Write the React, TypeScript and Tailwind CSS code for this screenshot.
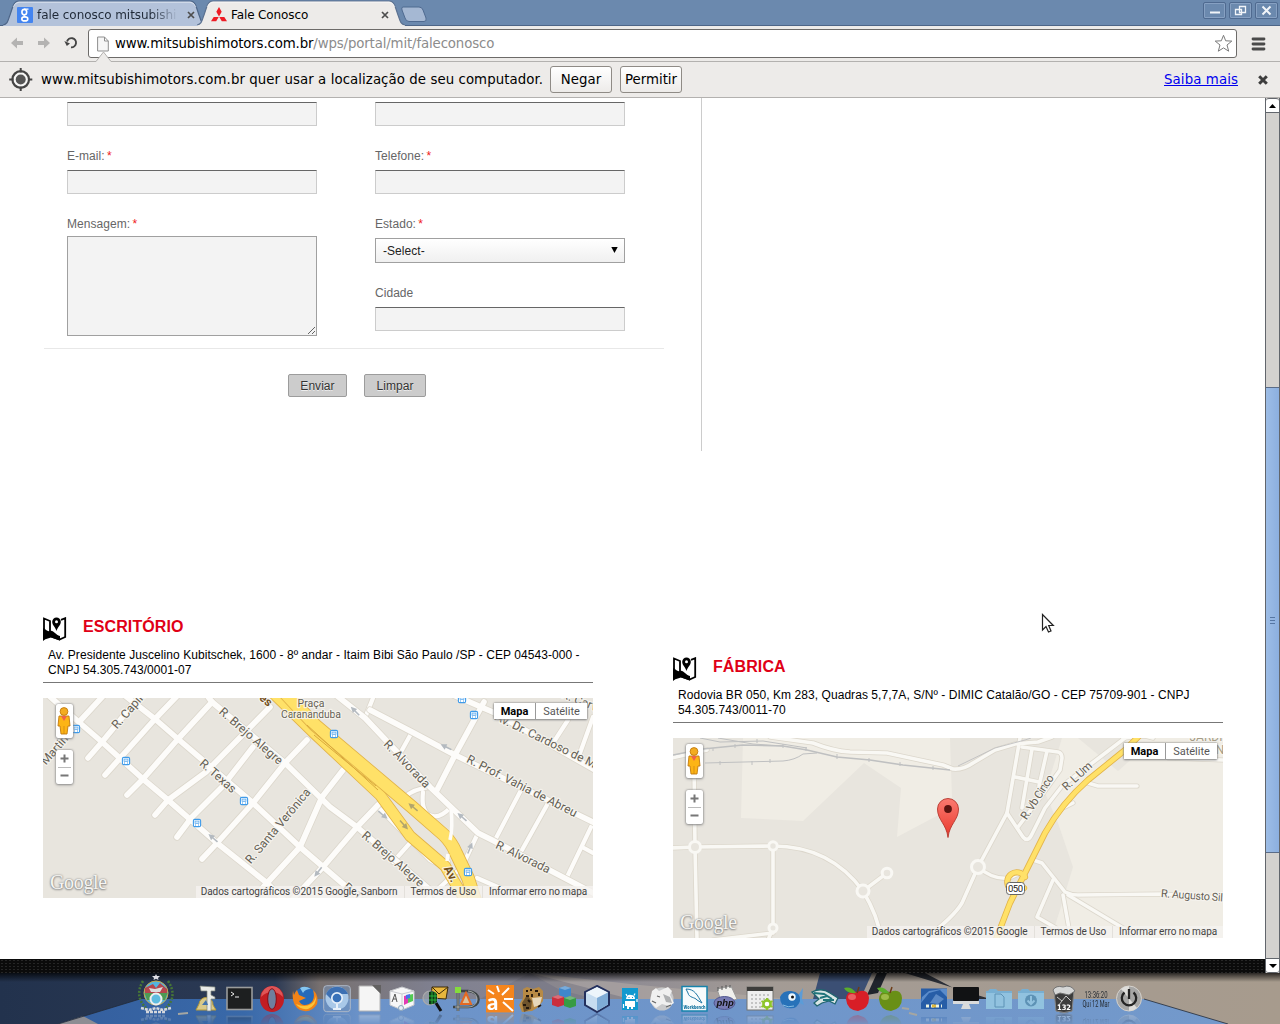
import React from "react";

type Pt = string;

/* ---------- browser chrome ---------- */

function TabShape({ w, active }: { w: number; active?: boolean }) {
  const d = `M0 25 C5 24 5 20 7 15 L10 6 Q12 1 16 1 L${w - 16} 1 Q${w - 12} 1 ${w - 10} 6 L${w - 7} 15 C${w - 5} 20 ${w - 5} 24 ${w} 25`;
  return (
    <svg className="absolute left-0 top-0" width={w} height={26} viewBox={`0 0 ${w} 26`}>
      <path d={d + " V26 H0 Z"} fill={active ? "#edebe9" : "#b3c2da"} />
      <path d={d} fill="none" stroke={active ? "#5b7190" : "#4d6587"} strokeWidth="1.2" />
      <path d={`M10 7 Q12 2.2 16 2.2 L${w - 16} 2.2 Q${w - 12} 2.2 ${w - 10} 7`} fill="none" stroke="#fff" opacity=".55" />
    </svg>
  );
}

function TabClose() {
  return (
    <svg width="8" height="8" viewBox="0 0 8 8" className="shrink-0">
      <path d="M1 1 L7 7 M7 1 L1 7" stroke="#4d4d4d" strokeWidth="1.7" />
    </svg>
  );
}

function WindowButton({ children }: { children: React.ReactNode }) {
  return (
    <div className="flex h-[17px] w-[23px] items-center justify-center rounded-[2px] border border-[#4f6a90] bg-[#6b89ae] shadow-[inset_0_0_0_1px_#86a0c2]">
      <svg width="13" height="13" viewBox="0 0 13 13" fill="none" stroke="#f2f5f9">
        {children}
      </svg>
    </div>
  );
}

function TabStrip() {
  return (
    <div className="relative flex h-[26px] shrink-0 border-b border-[#4d6587] bg-[#6b89ae]">
      <div className="relative ml-[3px] h-[26px] w-[203px]">
        <TabShape w={203} />
        <div className="relative flex h-full items-center pl-[14px] pt-[3px]">
          <div className="mr-[4px] flex h-[16px] w-[16px] shrink-0 items-center justify-center rounded-[1px] bg-[#4384f0]">
            <svg width="16" height="16" viewBox="0 0 16 16" fill="none" stroke="#fff">
              <ellipse cx="7.3" cy="5.1" rx="2.4" ry="2.7" strokeWidth="1.6" />
              <path d="M7 2.2 H11.5 M9.3 7.5 C6 8 6.5 9.3 8.5 9.8" strokeWidth="1.2" />
              <ellipse cx="7.8" cy="11.9" rx="3" ry="2" strokeWidth="1.6" />
            </svg>
          </div>
          <span className="w-[141px] overflow-hidden whitespace-nowrap bg-gradient-to-r from-[#1f2937] from-80% to-[#b3c2da] bg-clip-text text-[12px] leading-[18px] tracking-[-0.06px] text-transparent">
            fale conosco mitsubishi
          </span>
          <div className="ml-[9px]">
            <TabClose />
          </div>
        </div>
      </div>
      <div className="relative -ml-[9px] h-[26px] w-[208px]">
        <TabShape w={208} active />
        <div className="relative flex h-full items-center pl-[14px] pt-[3px]">
          <svg width="16" height="15" viewBox="0 0 16 15" className="mr-[4px]" fill="#ee1c25">
            <path d="M8 0 L10.7 4.8 L8 9.6 L5.3 4.8 Z M7.7 9.9 L5.2 14.3 H0 L2.7 9.9 Z M8.3 9.9 L10.8 14.3 H16 L13.3 9.9 Z" />
          </svg>
          <span className="w-[150px] text-[12px] leading-[18px] tracking-[-0.12px] text-black">Fale Conosco</span>
          <TabClose />
        </div>
      </div>
      <svg width="29" height="18" viewBox="0 0 29 18" className="-ml-[6px] mt-[5px]">
        <path d="M4 2 H20 Q23 2 24 5 L27 13 Q28 16.5 25 16.5 H10 Q7 16.5 6 13 L3 5 Q2 2 4 2 Z" fill="#a5b8d3" stroke="#4f6a90" />
      </svg>
      <div className="ml-auto mr-[2px] mt-[2px] flex gap-[3px]">
        <WindowButton>
          <path d="M2 8.5 H12" strokeWidth="2" />
        </WindowButton>
        <WindowButton>
          <path d="M5.5 2.5 H11.5 V8.5 H5.5 Z M1.5 5.5 H7.5 V10.5 H1.5 Z" strokeWidth="1.3" />
        </WindowButton>
        <WindowButton>
          <path d="M2.5 2.5 L10.5 10.5 M10.5 2.5 L2.5 10.5" strokeWidth="2" />
        </WindowButton>
      </div>
    </div>
  );
}

function Toolbar() {
  return (
    <div className="flex h-[36px] shrink-0 items-center border-b border-[#b3b1af] bg-[#edebe9]">
      <svg width="88" height="35" viewBox="0 26 88 35" className="shrink-0">
        <path d="M11 43 L17 37.5 V41 H23 V45 H17 V48.5 Z" fill="#b4b3b2" />
        <path d="M50 43 L44 37.5 V41 H38 V45 H44 V48.5 Z" fill="#b4b3b2" />
        <path d="M67 41.5 A4.6 4.6 0 1 1 71 47.3" fill="none" stroke="#444" strokeWidth="1.9" />
        <path d="M64.3 41 L70 43.500 L66.8 46 Z" fill="#444" />
      </svg>
      <div className="relative flex h-[29px] w-[1149px] items-center rounded-[3px] border border-[#6d6b69] bg-white pl-[8px]">
        <svg width="12" height="16" viewBox="0 0 12 16" className="mr-[6px]">
          <path d="M.6 1 H7.5 L11.3 5 V15 H.6 Z M7.5 1 V5 H11.3" fill="#f6f6f6" stroke="#8f8f8f" />
        </svg>
        <div className="text-[13.33px] tracking-[-0.14px] text-black">
          www.mitsubishimotors.com.br<span className="text-[#8c8c8c]">/wps/portal/mit/faleconosco</span>
        </div>
        <svg width="19" height="19" viewBox="0 0 19 19" className="ml-auto mr-[3px]">
          <path d="M9.5 1.3 L11.7 6.8 L17.8 7.1 L13 11 L14.7 17.2 L9.5 13.9 L4.3 17.2 L6 11 L1.2 7.1 L7.3 6.8 Z" fill="#fff" stroke="#7b7b7b" strokeLinejoin="round" />
        </svg>
      </div>
      <svg width="15" height="14" viewBox="0 0 15 14" className="ml-[14px]">
        <path d="M2 2 H13 M2 7 H13 M2 12 H13" stroke="#4a4a4a" strokeWidth="2.8" strokeLinecap="round" />
      </svg>
    </div>
  );
}

function InfoBar() {
  return (
    <div className="relative flex h-[36px] shrink-0 items-center border-b border-[#b3b1af] bg-[#edebe9]">
      <svg className="absolute left-[93px] top-[-11px]" width="22" height="12" viewBox="0 0 22 12">
        <path d="M1 11.5 L3 10.5 L10.5 1 L18 10.5 L20 11.5 Z" fill="#edebe9" />
        <path d="M1 10.5 H3 L10.5 1 L18 10.5 H20" fill="none" stroke="#b3b1af" />
      </svg>
      <svg width="24" height="24" viewBox="0 0 24 24" className="ml-[9px] mr-[8px]">
        <circle cx="11.7" cy="11.5" r="8.3" fill="#f7f7f6" stroke="#454545" strokeWidth="2.2" />
        <circle cx="11.7" cy="11.5" r="5" fill="#555" />
        <path d="M11.7 0 V4.5 M11.7 18.5 V23 M.2 11.5 H4.5 M19 11.5 H23.3" stroke="#454545" strokeWidth="2" />
      </svg>
      <span className="w-[502px] whitespace-nowrap text-[13.33px] tracking-[0.07px] text-black">
        www.mitsubishimotors.com.br quer usar a localização de seu computador.
      </span>
      <button className="ml-[7px] h-[27px] w-[62px] rounded-[3px] border border-[#8f8b86] bg-gradient-to-b from-white to-[#edebe9] text-[13.33px]">Negar</button>
      <button className="ml-[8px] h-[27px] w-[62px] rounded-[3px] border border-[#8f8b86] bg-gradient-to-b from-white to-[#edebe9] text-[13.33px]">Permitir</button>
      <a className="ml-auto mr-[20px] text-[13.33px] tracking-[0.1px] text-[#0000ee] underline">Saiba mais</a>
      <svg width="10" height="10" viewBox="0 0 10 10" className="mr-[12px]">
        <path d="M1.2 1.2 L8.8 8.8 M8.8 1.2 L1.2 8.8" stroke="#3d3d3d" strokeWidth="3" />
      </svg>
    </div>
  );
}

function Scrollbar() {
  return (
    <div className="flex w-[15px] shrink-0 flex-col border-x border-[#62666c] bg-[#d4d2cf]">
      <div className="flex h-[15px] items-center justify-center rounded-t-[3px] border-y border-[#62666c] bg-white">
        <svg width="7" height="4" viewBox="0 0 7 4"><path d="M0 4 L3.5 0 L7 4 Z" /></svg>
      </div>
      <div className="h-[274px]" />
      <div className="flex h-[466px] flex-col items-center justify-center gap-[2px] border-y border-[#5a6c88] bg-gradient-to-r from-[#9dbde6] to-[#8cafdf]">
        <div className="h-px w-[5px] bg-[#5676a3]" />
        <div className="h-px w-[5px] bg-[#5676a3]" />
        <div className="h-px w-[5px] bg-[#5676a3]" />
      </div>
      <div className="mt-auto flex h-[15px] items-center justify-center rounded-b-[3px] border-y border-[#62666c] bg-white">
        <svg width="8" height="4" viewBox="0 0 8 4"><path d="M0 0 L4 4 L8 0 Z" /></svg>
      </div>
    </div>
  );
}

/* ---------- contact form ---------- */

function Field() {
  return <div className="h-[24px] w-[250px] border border-[#ccc] border-t-[#666] bg-[#f3f3f3]" />;
}

function Label({ text, required, short }: { text: string; required?: boolean; short?: boolean }) {
  return (
    <div className={(short ? "h-[42px]" : "h-[44px]") + " pt-[22px] text-[12px] leading-[16px] tracking-[0.04px] text-[#666]"}>
      {text}
      {required && <span className="-ml-px text-[#f02020]"> *</span>}
    </div>
  );
}

function ContactForm() {
  return (
    <div className="h-[353px] w-[702px] border-r border-[#ccc] pt-[4px]">
      <div className="flex h-[246px] gap-[58px] pl-[67px]">
        <div>
          <Field />
          <Label text="E-mail:" required />
          <Field />
          <Label text="Mensagem:" required short />
          <div className="flex h-[100px] w-[250px] items-end justify-end border border-[#a0a0a0] bg-[#f3f3f3]">
            <svg width="9" height="9" viewBox="0 0 9 9"><path d="M1 8 L8 1 M5 8 L8 5" stroke="#555" strokeWidth=".9" /></svg>
          </div>
        </div>
        <div>
          <Field />
          <Label text="Telefone:" required />
          <Field />
          <Label text="Estado:" required />
          <div className="flex h-[25px] w-[250px] items-center justify-between border border-[#a0a0a0] bg-gradient-to-b from-white to-[#f0f0f0] pl-[7px] pr-[6px] pt-px text-[12px] tracking-[0.04px] text-[#222]">
            -Select-
            <svg width="7" height="6" viewBox="0 0 7 6" className="mb-[3px]"><path d="M.3 0 H6.7 L3.5 6 Z" /></svg>
          </div>
          <Label text="Cidade" />
          <Field />
        </div>
      </div>
      <div className="ml-[44px] h-px w-[620px] bg-[#e8e8e8]" />
      <div className="mt-[25px] flex gap-[17px] pl-[288px]">
        <button className="h-[23px] w-[59px] rounded-[2px] border border-[#9c9c9c] bg-[#ccc] pt-px text-[12px] tracking-[0.04px] text-[#333] [text-shadow:0_1px_0_#eee]">Enviar</button>
        <button className="h-[23px] w-[62px] rounded-[2px] border border-[#9c9c9c] bg-[#ccc] pt-px text-[12px] tracking-[0.04px] text-[#333] [text-shadow:0_1px_0_#eee]">Limpar</button>
      </div>
    </div>
  );
}

/* ---------- maps ---------- */

interface LabelProps {
  x: number;
  y: number;
  a?: number;
  len?: number;
  start?: boolean;
  bold?: boolean;
  color?: string;
  size?: number;
  children: string;
}

function MapLabel({ x, y, a = 0, len, start, bold, color = "#655f54", size = 12, children }: LabelProps) {
  return (
    <text
      transform={`translate(${x} ${y}) rotate(${a})`}
      dy="4"
      textAnchor={start ? "start" : "middle"}
      textLength={len}
      fontSize={size}
      fontWeight={bold ? 700 : 400}
      fill={color}
      stroke="#f7f5f0"
      strokeWidth="2.4"
      strokeOpacity=".85"
      strokeLinejoin="round"
      paintOrder="stroke"
    >
      {children}
    </text>
  );
}

function Roads({ list, w, c = "#fdfcfa", edge = "#dcd7cc" }: { list: Pt[]; w: number; c?: string; edge?: string }) {
  return (
    <g fill="none" strokeLinecap="round" strokeLinejoin="round">
      {list.map((d, i) => (
        <path key={"e" + i} d={d} stroke={edge} strokeWidth={w + 1.6} />
      ))}
      {list.map((d, i) => (
        <path key={"f" + i} d={d} stroke={c} strokeWidth={w} />
      ))}
    </g>
  );
}

function Arrow({ x, y, a, color = "#b4bac0" }: { x: number; y: number; a: number; color?: string }) {
  return (
    <g transform={`translate(${x} ${y}) rotate(${a})`}>
      <path d="M-6 -.8 H0 V-3 L6 0 L0 3 V.8 H-6 Z" fill={color} />
    </g>
  );
}

function BusStop({ x, y }: { x: number; y: number }) {
  return (
    <g transform={`translate(${x} ${y})`}>
      <rect x="-3.6" y="-3.6" width="7.2" height="7.2" rx="1.4" fill="#fff" stroke="#3f9bea" strokeWidth="1.1" />
      <rect x="-2" y="-2" width="4" height="2.4" fill="#cfe6fb" stroke="#3f9bea" strokeWidth=".6" />
      <path d="M-2 2 H-1 M1 2 H2" stroke="#3f9bea" strokeWidth="1" />
    </g>
  );
}

function OfficeStreets() {
  return (
    <svg width="550" height="200" viewBox="0 0 550 200" className="block" fontFamily="Roboto">
      <rect width="550" height="200" fill="#e8e5de" />
      <Roads
        w={4.2}
        list={[
          "M359 52 L369 34", "M350 164 L367 145", "M335 109 L387 162 Q394 167 405 164",
          "M477 94 L452 142", "M504 107 L479 152", "M550 125 L524 179", "M539 149 L550 155",
          "M525 22 L512 42", "M550 19 L537 55", "M330 0 L322 20", "M435 135 L419 169 L382 203",
          "M362 99 Q370 91 387 89 M380 94 Q378 112 386 117 Q396 122 408 109",
          "M434 180 L480 200",
        ]}
      />
      <Roads
        w={5.6}
        list={[
          "M4 -4 L30 19 L59 44 L100 81 L125 102 L174 145 L224 185 L242 203",
          "M80 -4 L112 21 L135 41 L210 105 L257 149 L320 203",
          "M163 -4 L169 4 L242 65 L287 109 L314 129 L400 203",
          "M60 -2 L37 23", "M97 -2 L59 44 L45 60", "M134 -2 L112 21 L62 77",
          "M169 4 L135 41 L100 81 L84 97", "M227 9 L163 74 L125 102 L112 117",
          "M210 49 L179 89 L149 119 L134 139", "M264 42 L242 65 L210 105 L174 145 L159 161",
          "M300 72 L279 99 L257 149 L224 185 L208 203", "M335 107 L314 129 L280 169 L248 203",
          "M293 -3 L322 20 L387 89 L435 135 L449 142 L552 196",
          "M327 12 L369 34 L412 57 L552 125", "M441 4 L412 57 L394 92", "M408 -4 L452 15 L552 72",
        ]}
      />
      <Roads w={10} c="#ffe168" edge="#e2b348" list={["M229 -6 L272 36 L337 97 L367 138 L402 168 L424 205"]} />
      <Roads w={12} c="#ffe168" edge="#e2b348" list={["M241 -6 L272 27 L369 109 L401 137 Q409 145 413 155 L425 180 L433 205"]} />
      <path d="M264 27 L335 92 M271 37 L333 88" fill="none" stroke="#d9a93c" strokeWidth="1" />
      <path d="M408 110 Q410 130 407 142 M405 156 L404 163" fill="none" stroke="#fdfcfa" strokeWidth="3.5" />
      <Arrow x={170} y={140} a={221} />
      <Arrow x={312} y={13} a={225} />
      <Arrow x={403} y={49} a={206} />
      <Arrow x={419} y={119} a={221} />
      <Arrow x={340} y={117} a={40} />
      <Arrow x={370} y={109} a={220} color="#b2a56c" />
      <Arrow x={361} y={127} a={48} color="#b2a56c" />
      <Arrow x={427} y={150} a={-68} />
      <Arrow x={275} y={174} a={128} />
      <MapLabel x={71} y={29} a={-49} start>R. Capin</MapLabel>
      <MapLabel x={0} y={65} a={-49} start>Martins</MapLabel>
      <MapLabel x={208} y={38} a={41} len={80}>R. Brejo Alegre</MapLabel>
      <MapLabel x={175} y={78} a={41} len={44}>R. Texas</MapLabel>
      <MapLabel x={235} y={128} a={-50} len={94}>R. Santa Verônica</MapLabel>
      <MapLabel x={268} y={5} size={10.5}>Praça</MapLabel>
      <MapLabel x={268} y={16} size={10.5} len={60}>Carananduba</MapLabel>
      <MapLabel x={364} y={66} a={46} len={61}>R. Alvorada</MapLabel>
      <MapLabel x={479} y={88} a={27} len={122}>R. Prof. Vahia de Abreu</MapLabel>
      <MapLabel x={453} y={18} a={26} start>Av. Dr. Cardoso de M</MapLabel>
      <MapLabel x={480} y={159} a={26} len={59}>R. Alvorada</MapLabel>
      <MapLabel x={350} y={161} a={41} len={78}>R. Brejo Alegre</MapLabel>
      <MapLabel x={302} y={187} a={41} start>R. Texas</MapLabel>
      <MapLabel x={538} y={3} a={22}>R. Carv.</MapLabel>
      <MapLabel x={408} y={176} a={62} bold color="#74501b">Av.</MapLabel>
      <MapLabel x={223} y={2} a={42} bold color="#74501b">es</MapLabel>
      <BusStop x={33} y={31} />
      <BusStop x={83} y={63} />
      <BusStop x={201} y={103} />
      <BusStop x={154} y={125} />
      <BusStop x={291} y={36} />
      <BusStop x={419} y={1} />
      <BusStop x={431} y={17} />
      <BusStop x={425} y={174} />
    </svg>
  );
}

function FactoryStreets() {
  return (
    <svg width="550" height="200" viewBox="0 0 550 200" className="block" fontFamily="Roboto">
      <defs>
        <linearGradient id="pin" x1="0" y1="0" x2="0" y2="1">
          <stop offset="0" stopColor="#fb7a70" />
          <stop offset="1" stopColor="#e8382c" />
        </linearGradient>
      </defs>
      <rect width="550" height="200" fill="#e8e5de" />
      <path d="M70 0 L68 80 L130 83 L191 25 L228 50 L224 99 L275 72 L279 60 L277 0 Z" fill="#f0ede5" />
      <path d="M389 0 L372 55 L385 85 L400 129 L387 172 L378 200 H550 V0 Z" fill="#f0ede5" />
      <path d="M405 0 L450 0 L462 18 L445 33 Z" fill="#e8e5de" />
      <Roads
        w={3.6}
        c="#f9f8f4"
        list={[
          "M-2 20 L34 12", "M97 -1 L140 5 Q160 13 177 14 L214 15 L270 27 L280 31 Q290 32 300 25 L322 12 L342 6 L365 4 L379 -1",
          "M21 22 L22 109 L24 202", "M-2 110 L22 109 L100 108 Q157 108 190 153 Q206 180 208 202",
          "M100 108 L100 190 L95 202", "M40 202 L100 195", "M190 153 L214 135",
          "M250 202 Q280 180 289 165 L305 129 L334 75 L347 0",
          "M334 75 L350 99 Q355 105 359 96 L372 70 L389 48 L452 0",
          "M349 9 L385 14 Q389 15 389 20 L387 32 L369 57 L345 89", "M359 11 L349 70", "M374 13 L366 48", "M342 39 L366 44",
          "M305 129 Q320 142 336 140 L350 134", "M415 45 L425 48 L464 48", "M392 69 L400 65",
          "M360 122 L369 125 L392 154 Q398 157 405 157 L489 156 L550 160",
          "M380 142 L364 179 L383 190", "M390 157 L398 202", "M395 157 L460 196", "M450 0 L472 -2 L480 0", "M495 20 L550 22",
        ]}
      />
      <g fill="#e8e5de" stroke="#f9f8f4" strokeWidth="3">
        <circle cx="22" cy="109" r="5.5" />
        <circle cx="100" cy="108" r="4.2" />
        <circle cx="190" cy="153" r="6" />
        <circle cx="214" cy="135" r="4.8" />
        <circle cx="100" cy="190" r="4" />
        <circle cx="305" cy="129" r="6.5" />
      </g>
      <g fill="none" stroke="#bfc0c1" strokeWidth="1">
        <path d="M0 17 L30 11 L70 7 L110 8 L134 12 L164 19 L197 22 L230 27 L277 32" strokeWidth="1.6" />
        <path d="M32 25 L110 23 Q122 22 130 16 L144 15" />
        <path d="M27 0 L47 4 L90 3 L134 10" />
        <path d="M45 0 L80 6 L110 8" />
        <path d="M285 28 L322 10 L352 2 L358 0" strokeWidth=".9" />
        <path d="M40 10 V13 M62 6 V10 M84 1 V5 M110 6 V10 M133 9 V13 M164 16 V21 M196 20 V24 M227 24 V28 M260 28 V32 M47 23 V27 M79 23 V27 M97 21 V25" />
      </g>
      <Roads
        w={4.6}
        c="#ffe168"
        edge="#e2b348"
        list={["M352 139 A9.5 9.5 0 1 0 351 150", "M466 -2 L452 12 L415 42 Q389 65 372 95 L350 139 L337 165 L322 204"]}
      />
      <MapLabel x={364} y={59} a={-57} len={51} size={11.5}>R. Vb Cinco</MapLabel>
      <MapLabel x={404} y={38} a={-43} len={36} size={11.5}>R. L Um</MapLabel>
      <MapLabel x={488} y={155} a={4} start size={11} len={62}>R. Augusto Sil</MapLabel>
      <MapLabel x={533} y={-1} color="#a69d86" size={12}>JARDI</MapLabel>
      <MapLabel x={547} y={12} color="#a69d86" size={12}>N</MapLabel>
      <rect x="333.5" y="144.5" width="18" height="12" rx="3" fill="#fff" stroke="#666" />
      <text x="342.5" y="154.2" textAnchor="middle" fontSize="9.5" textLength="15" fill="#222">050</text>
      <path d="M275 99.5 C273.5 86 264.5 82 264.5 71 A10.5 10.5 0 0 1 285.5 71 C285.5 82 276.5 86 275 99.5 Z" fill="url(#pin)" stroke="#b6372c" strokeWidth=".9" />
      <circle cx="275" cy="71" r="3.9" fill="#5c1410" />
    </svg>
  );
}

function MapControls() {
  return (
    <div className="absolute left-[12.5px] top-[6px] flex flex-col gap-[12px]">
      <div className="flex h-[34px] w-[17px] items-center justify-center rounded-[2px] bg-white shadow-[0_0_2px_#777,0_1px_3px_#999]">
        <svg width="14" height="30" viewBox="0 0 14 30" stroke="#c27a10" strokeWidth=".9">
          <path d="M2 10 H12 L13 20 H11 L10 28 H4 L3 20 H1 Z" fill="#fcb415" />
          <path d="M4 10 H10 L7 15 Z" fill="#f0634a" stroke="none" />
          <circle cx="7" cy="5.5" r="3.9" fill="#f3ac20" />
          <path d="M7 20 V28" strokeWidth=".6" />
        </svg>
      </div>
      <div className="flex h-[34px] w-[17px] flex-col items-center rounded-[2px] bg-white shadow-[0_0_2px_#777,0_1px_3px_#999]">
        <svg width="17" height="34" viewBox="0 0 17 34" stroke="#777" strokeWidth="2">
          <path d="M4.5 8.500 H12.5 M8.5 4.500 V12.500 M4.5 25.500 H12.5" />
          <path d="M2 17.5 H15" stroke="#bbb" strokeWidth="1" />
        </svg>
      </div>
    </div>
  );
}

function MapPanel({ credit, children }: { credit: string; children: React.ReactNode }) {
  return (
    <div className="relative h-[200px] w-[550px] overflow-hidden font-['Roboto']">
      {children}
      <MapControls />
      <div className="absolute right-[6px] top-[5px] flex h-[16px] text-[11px] leading-[17px] shadow-[0_0_2px_#777,0_1px_2px_#999]">
        <div className="w-[41px] bg-white text-center font-bold text-black">Mapa</div>
        <div className="w-[52px] border-l border-[#999] bg-white text-center text-[#565656]">Satélite</div>
      </div>
      <div className="absolute bottom-[4px] left-[7px] font-['Liberation_Serif'] text-[20px] leading-[24px] tracking-[-0.35px] text-[#f6f5f2] [text-shadow:0_0_2px_#777,0_1px_2px_#888]">Google</div>
      <div className="absolute bottom-0 right-0 flex h-[12px] whitespace-nowrap bg-[#f5f3f0]/80 text-[10px] leading-[12px] text-[#444]">
        <span className="pl-[5px] pr-[6px] tracking-[-0.05px]">{credit}</span>
        <span className="border-l border-[#e3e0db] px-[6px] tracking-[-0.12px]">Termos de Uso</span>
        <span className="border-l border-[#e3e0db] pl-[6px] pr-[6px] tracking-[-0.1px]">Informar erro no mapa</span>
      </div>
    </div>
  );
}

function Office({ title, lines, credit, children }: { title: string; lines: string[]; credit: string; children: React.ReactNode }) {
  return (
    <section className="w-[550px]">
      <div className="flex h-[30px]">
        <svg width="24" height="24" viewBox="0 0 24 24">
          <path d="M1 1.5 L7 4 V16 L1 22 Z M18 2.8 L22.2 1.2 V20 L16.5 22.5 L8 19.5" fill="none" stroke="#000" strokeWidth="1.8" />
          <path d="M0 11 C3 12 4 15 7 14 C11 13 12 18 17 19 V23.5 L8 20.5 L0 23 Z" />
          <path d="M13.5 14 C12.5 10 9.2 8.5 9.2 4.7 A4.3 4.3 0 0 1 17.8 4.7 C17.8 8.5 14.5 10 13.5 14 Z" />
          <circle cx="13.5" cy="4.7" r="1.5" fill="#fff" />
        </svg>
        <h2 className="ml-[16px] text-[16px] font-bold leading-[19px] tracking-[0.1px] text-[#e00016]">{title}</h2>
      </div>
      <p className="h-[36px] whitespace-nowrap border-b border-[#777] pl-[5px] pt-[1px] text-[12px] leading-[15px] tracking-[0.06px] text-black">
        {lines[0]}
        <br />
        {lines[1]}
      </p>
      <div className="mt-[15px]">
        <MapPanel credit={credit}>{children}</MapPanel>
      </div>
    </section>
  );
}

/* ---------- desktop dock ---------- */

const ICONS: React.ReactNode[] = [
  <g key="caliper">
    <path d="M3 25 H23 L20 20 A7 7 0 0 0 6 19 Z" fill="#d9c98a" stroke="#b89a36" />
    <path d="M7 1 L22 2 V6 H18 V10 L22 12 V14 H18 V26 H14 V6 H8 Z" fill="#e9ebe8" stroke="#80857c" strokeWidth=".7" />
    <path d="M9 20 H15 L13 15 Z" fill="#4374ae" />
  </g>,
  <g key="terminal">
    <rect x="1" y="2.5" width="25" height="22" fill="#1d1f20" stroke="#9a9c9c" strokeWidth="1.6" />
    <path d="M5 7 L8 9 L5 11 M9 12 H13" fill="none" stroke="#eee" />
  </g>,
  <g key="opera">
    <ellipse cx="14" cy="14" rx="12" ry="13" fill="#c21d23" />
    <path d="M3 12 Q4 2 14 1 Q24 2 25 12 Q20 7 14 7 Q8 7 3 12 Z" fill="#eb6e6e" opacity=".7" />
    <ellipse cx="14" cy="14" rx="4.3" ry="10.3" fill="#6f7f9e" stroke="#8d0b12" />
  </g>,
  <g key="firefox">
    <circle cx="14" cy="13.5" r="11.5" fill="#246abb" />
    <path d="M9 3 Q14 0 20 4 Q14 4 12 8 Z" fill="#86c6ef" />
    <path d="M2 6 Q0 20 9 25 Q20 29 26 19 Q28 10 22 5 Q25 15 18 19 Q11 22 8 16 L15 13 L8 10 L6 5 Q4 7 3 10 Z" fill="#f28318" />
    <path d="M25 11 Q26 20 17 24 Q9 25 5 19 Q14 23 20 19 Q24 16 25 11 Z" fill="#fbc53a" />
  </g>,
  <g key="chromium">
    <rect x=".7" y=".7" width="26.6" height="26" rx="3" fill="#7796bc" fillOpacity=".5" stroke="#aeb8c7" />
    <circle cx="14" cy="13" r="11.5" fill="#a9c8e8" />
    <path d="M3 9 A12 12 0 0 1 25 9 H14 L9 15 Z" fill="#3d70b3" />
    <circle cx="14" cy="13" r="5.2" fill="#3871b9" stroke="#e6eff9" strokeWidth="1.7" />
    <path d="M14 19 V24 M10 24 H18" stroke="#e6eff9" strokeWidth="2" />
  </g>,
  <g key="writer">
    <path d="M3 1 H17 L24 8 V26 H3 Z" fill="#f5f5f5" stroke="#b4b4b4" />
    <path d="M16 0 H25 V9 Z" fill="#626161" />
  </g>,
  <g key="cube">
    <path d="M2 6 L14 2 L26 6 V20 L14 25 L2 20 Z" fill="#f7f7f8" stroke="#c4c6ca" />
    <path d="M14 9 V25 M2 6 L14 9 L26 6" stroke="#c9cbd0" fill="none" />
    <path d="M4 17 L7 9 L9 17 M5 14 H8" stroke="#555" fill="none" />
    <path d="M16 11 L20 10 V18 L16 20 Z" fill="#e33bb4" />
    <path d="M20 10 L25 9 V16 L20 18 Z" fill="#52ca54" />
    <path d="M18 10 L22 9 V13 L18 14 Z" fill="#4375eb" />
    <circle cx="13" cy="23" r="2.5" fill="#e8f0f7" stroke="#8ba4bb" />
  </g>,
  <g key="mailsearch">
    <path d="M11 2 L27 2 L25 14 L10 13 Z" fill="#e8b63d" stroke="#3c2b0b" />
    <path d="M11 2 L18 9 L27 2" fill="none" stroke="#3c2b0b" />
    <circle cx="9" cy="13" r="7" fill="#9fa6ad" fillOpacity=".6" stroke="#aaa" strokeWidth="1.2" />
    <path d="M8 7 Q13 5 16 9 V17 Q12 20 8 19 Z" fill="#0d3a14" />
    <path d="M8 11 H16 M8 15 H16 M11 7 V19 M14 7 V18" stroke="#30c83f" strokeWidth=".8" />
    <path d="M15 18 L20 26" stroke="#111" strokeWidth="3" />
  </g>,
  <g key="route">
    <path d="M5 5 V26 M0 22 H15 C29 22 29 7 15 6 H8" fill="none" stroke="#3e4446" strokeWidth="2.6" />
    <path d="M5 8 V26 M2 22 H15 C27 22 27 7 15 6" fill="none" stroke="#b4b9b7" strokeWidth=".9" />
    <rect x="2" y="2" width="6" height="6" fill="#84dc3c" />
    <path d="M8 19 L13 8 L18 19 Z" fill="#d9c39f" stroke="#e36a23" strokeWidth="2" />
  </g>,
  <g key="aptana">
    <rect x="0" y="0" width="28" height="27.5" fill="#f5851d" />
    <path d="M13 7 L11 1 M16 10 L23 3 M18 14 H27 M17 17 L27 26 M8 9 L2 5" stroke="#fff" strokeWidth="2" />
    <text x="1" y="25" fontFamily="Lato" fontSize="22" fontWeight="900" fill="#fff">a</text>
  </g>,
  <g key="leopard">
    <path d="M5 4 L9 2 L15 4 L21 2 L25 6 L25 16 L19 23 L14 26 L4 27 L1 20 L5 13 Z" fill="#b78a45" />
    <path d="M4 18 L9 10 L14 16 L13 24 L6 27 Z" fill="#6f542c" />
    <path d="M14 13 L24 12 L22 20 L16 22 Z" fill="#e7d8ba" />
    <path d="M8 6 H10 M12 5 H14 M17 6 H20 M8 11 H11 M5 20 H8 M8 23 H11 M10 15 L12 17 M20 22 L23 20 M14 9 V12 M21 8 V11" stroke="#24180d" strokeWidth="1.8" />
  </g>,
  <g key="blocks">
    <path d="M8 3 L14 1 L20 3 V11 L14 13 L8 11 Z" fill="#3f87cb" />
    <path d="M1 12 L7 10 L13 12 V20 L7 22 L1 20 Z" fill="#cb2e3c" />
    <path d="M13 13 L19 11 L25 13 V21 L19 23 L13 21 Z" fill="#379b44" />
    <path d="M8 3 L14 1 L20 3 L14 5 Z M1 12 L7 10 L13 12 L7 14 Z M13 13 L19 11 L25 13 L19 15 Z" fill="#fff" opacity=".3" />
  </g>,
  <g key="netbeans">
    <path d="M14 1 L26 7 V20 L14 27 L2 20 V7 Z" fill="#c6dcf0" stroke="#23305e" strokeWidth="2" />
    <path d="M3 7.5 L14 13 L25 7.5 L14 2 Z" fill="#edf5fb" />
    <path d="M14 13 V26 L25 19.5 V7.5 Z" fill="#7facd6" />
  </g>,
  <g key="android">
    <rect x="6" y="3" width="16" height="22" fill="#1199cf" />
    <path d="M10 14 Q11 9 15 10 Q19 10 19 14 Z M9 16 H19 V22 H17 V24 H15 V22 H13 V24 H11 V21 H9 Z" fill="#fff" />
    <path d="M11 11 L10 9 M18 10.5 L19 8.5 M7.5 19 V23 M21 14 V17" stroke="#fff" strokeWidth="1.2" />
    <path d="M12.5 12.5 H13.5 M16 12.5 H17" stroke="#1199cf" />
  </g>,
  <g key="ferret">
    <circle cx="14" cy="14" r="11.5" fill="#c8c9cb" />
    <path d="M4 6 L8 3 L11 6 L20 2 L24 6 L22 10 L26 18 L21 21 L14 19 L8 23 L2 17 Z" fill="#f0f0f0" />
    <path d="M9 11 L12 12 M4 16 L8 18 M18 22 L23 20" stroke="#666" strokeWidth="1.3" fill="none" />
    <path d="M15 9 L22 12 L24 18 L18 17 Z" fill="#aeb0b2" />
  </g>,
  <g key="workbench">
    <rect x="1" y="1.5" width="25" height="24.5" fill="#f7fbfc" stroke="#1583ac" strokeWidth="1.5" />
    <path d="M5 4 C14 4 16 10 21 18 L16 15 C14 12 8 13 7 8 Z" fill="none" stroke="#1e75a4" />
    <text x="2.5" y="24" fontFamily="Open Sans" fontSize="5.4" fontWeight="800" textLength="22" lengthAdjust="spacingAndGlyphs" fill="#1675a0">Workbench</text>
  </g>,
  <g key="php">
    <path d="M4 4 L18 1 L24 14 L9 19 Z" fill="#f0f0ec" stroke="#999" />
    <path d="M5 2 V6 M9 1 V5 M13 0 V4 M17 0 V3" stroke="#555" />
    <ellipse cx="11.5" cy="18" rx="10.5" ry="6.5" fill="#777bb3" stroke="#50568e" />
    <text x="3.5" y="21" fontFamily="Liberation Sans" fontSize="9.5" fontWeight="700" fontStyle="italic" fill="#111">php</text>
  </g>,
  <g key="calendar">
    <rect x="1" y="2" width="26" height="23" fill="#eee" stroke="#73736f" />
    <rect x="1" y="2" width="26" height="4" fill="#3d3d3b" />
    <path d="M5 10 H23 M5 14 H23 M5 18 H15 M5 22 H15" stroke="#c4c4c4" strokeWidth="2" strokeDasharray="2 2" />
    <circle cx="21" cy="19" r="3.6" fill="#fff" stroke="#8fc52a" strokeWidth="2.6" />
    <path d="M21 13 V16 M21 22 V25 M15.5 16 L18 17.5 M26.5 16 L24 17.5 M15.5 22 L18 20.5 M26.5 22 L24 20.5" stroke="#8fc52a" strokeWidth="2" />
  </g>,
  <g key="fish">
    <path d="M19 12 L25 3 L24 14 L26 20 L19 17 Z" fill="#5b9cd8" />
    <path d="M2 12 Q5 5 13 6 Q23 7 22 16 Q19 25 10 23 Q2 21 2 12 Z" fill="#2872b9" />
    <circle cx="14" cy="12" r="3.7" fill="#eef8fd" />
    <circle cx="14.5" cy="12" r="1.5" fill="#111" />
    <path d="M5 20 Q10 23 16 21" stroke="#86bce2" fill="none" />
  </g>,
  <g key="turtle">
    <path d="M1 7 Q11 2 19 8 L27 13 L24 19 L18 16 L11 18 L6 21 L3 18 L8 14 Z" fill="#dae6e5" stroke="#20656f" strokeWidth="1.3" />
    <path d="M3 8 L13 9 L21 14 M9 13 L16 11 M12 15 L23 15" fill="none" stroke="#20757b" strokeWidth="2" />
  </g>,
  <g key="redapple">
    <path d="M14 7 Q25 3 26 13 Q26 24 15 26 Q4 25 3 14 Q4 4 14 7 Z" fill="#d81e27" />
    <ellipse cx="9" cy="12" rx="4" ry="3" fill="#f9898a" opacity=".6" />
    <path d="M14 8 L16 2" stroke="#6e3c17" strokeWidth="1.5" />
    <path d="M1 3 Q8 1 13 8 Q4 9 1 3 Z" fill="#5bae2b" />
  </g>,
  <g key="greenapple">
    <path d="M14 7 Q25 3 26 13 Q26 24 15 26 Q4 25 3 14 Q4 4 14 7 Z" fill="#698f16" />
    <ellipse cx="9" cy="12" rx="4" ry="3" fill="#c0d869" opacity=".6" />
    <path d="M14 8 L16 2" stroke="#6e3c17" strokeWidth="1.5" />
    <path d="M1 3 Q8 1 13 8 Q4 9 1 3 Z" fill="#5bae2b" />
  </g>,
];

const TRAY: React.ReactNode[] = [
  <g key="desktop">
    <rect x="1" y="3.5" width="26" height="20.5" fill="#275da7" />
    <path d="M1 18 L9 8 L20 5 L27 12 V4 H22 L9 6 L2 12 Z" fill="#5b8ccb" />
    <path d="M10 18 L16 9 L24 14 L18 19 Z" fill="#7fa6da" opacity=".6" />
    <path d="M6 21 H22" stroke="#eef4df" strokeWidth="3" strokeDasharray="3 2" />
    <path d="M12 21 H16" stroke="#e1b93c" strokeWidth="3" />
  </g>,
  <g key="monitor">
    <rect x="1" y="2" width="26" height="14" rx="1" fill="#111214" />
    <path d="M1 16 H27 V19 H1 Z M11 19 H17 L19 24 H9 Z" fill="#d9dbdc" />
  </g>,
  <g key="docs">
    <path d="M1 6 H3 L5 4 H11 L13 6 H27 V24 H1 Z" fill="#78afd2" />
    <path d="M1 8 H27 V24 H1 Z" fill="#91c2df" />
    <path d="M10 9 H16 L19 12 V22 H10 Z" fill="none" stroke="#5d92b5" />
  </g>,
  <g key="downloads">
    <path d="M1 6 H3 L5 4 H11 L13 6 H27 V24 H1 Z" fill="#78afd2" />
    <path d="M1 8 H27 V24 H1 Z" fill="#91c2df" />
    <circle cx="14" cy="15.5" r="6" fill="#5d92b5" />
    <path d="M14 11 V18 M10.5 15.5 L14 19 L17.5 15.5" fill="none" stroke="#91c2df" strokeWidth="2" />
  </g>,
  <g key="trash">
    <path d="M4 5 L6 26 Q14 29 22 26 L24 5 Z" fill="#3c3c3c" stroke="#858585" />
    <path d="M7 12 L12 16 L16 11 L21 16 M8 21 L12 16" stroke="#c7c7c7" fill="none" />
    <path d="M3 5 Q6 0 13 2 Q21 -1 25 6 L19 10 L10 8 L5 10 Z" fill="#d6d7d7" stroke="#727272" />
    <text x="14" y="24.5" textAnchor="middle" fontFamily="DejaVu Sans" fontSize="7.5" fontWeight="700" textLength="14" lengthAdjust="spacingAndGlyphs" fill="#fff">132</text>
  </g>,
  <g key="clock" fontFamily="Roboto" fontSize="9.5" fill="#272d34">
    <text x="14" y="12.5" textAnchor="middle" textLength="23" lengthAdjust="spacingAndGlyphs">13:36:20</text>
    <text x="14" y="21.5" textAnchor="middle" textLength="27" lengthAdjust="spacingAndGlyphs">Qui 12 Mar</text>
  </g>,
  <g key="power">
    <circle cx="14" cy="13.5" r="12.5" fill="#a6a6a5" stroke="#d4d1cc" />
    <path d="M14 13.5 L6 4 A12.5 12.5 0 0 1 14 1 Z M14 13.5 L22 23 A12.5 12.5 0 0 1 14 26 Z" fill="#deddda" />
    <path d="M9.5 7.5 A7.2 7.2 0 1 0 18.5 7.5 M14 4 V14" fill="none" stroke="#242424" strokeWidth="2.3" />
  </g>,
];

function DockRow({ items }: { items: React.ReactNode[] }) {
  return (
    <div className="flex">
      {items.map((icon, i) => (
        <div key={i} className="flex w-[32.5px] justify-center">
          <div className="h-[28px] w-[28px] [-webkit-box-reflect:below_0px_linear-gradient(transparent_55%,rgba(0,0,0,0.35))]">
            <svg width="28" height="28" viewBox="0 0 28 28" className="block">{icon}</svg>
          </div>
        </div>
      ))}
    </div>
  );
}

function CoatOfArms() {
  return (
    <div className="h-[40px] w-[40px] [-webkit-box-reflect:below_0px_linear-gradient(transparent_65%,rgba(0,0,0,0.35))]">
      <svg width="40" height="40" viewBox="0 0 40 40" className="block">
        <path d="M20 0 L21 2 L24 2 L22 4 L22.5 6 L20 4.7 L17.5 6 L18 4 L16 2 L19 2 Z" fill="#dedee4" />
        <path d="M7 7 Q-2 22 10 34 M32 7 Q42 22 30 34" fill="none" stroke="#467636" strokeWidth="2.5" strokeDasharray="2 1.5" />
        <circle cx="20" cy="19" r="12" fill="#52b4df" stroke="#c4a847" />
        <path d="M9 14 L17 10 L20 14 L24 9 L31 15 V20 H9 Z" fill="#b5454d" />
        <path d="M8.5 19 H31.5 L29 26 H11 Z" fill="#4d9a53" />
        <path d="M13 14 L19 15 L27 13 L24 18 H15 Z" fill="#ddd" />
        <circle cx="20" cy="25" r="5.5" fill="#5ebcdf" stroke="#eee" strokeWidth="2" />
        <path d="M5 34 L13 36 L20 34 L27 36 L35 34 M10 38 H30" fill="none" stroke="#d5d8dd" strokeWidth="2.5" strokeDasharray="3 1" />
      </svg>
    </div>
  );
}

function Wallpaper() {
  return (
    <svg className="absolute left-0 top-0" width="1280" height="51" viewBox="0 973 1280 51">
      <defs>
        <linearGradient id="sky">
          <stop offset="0" stopColor="#22324d" />
          <stop offset=".215" stopColor="#2c3a54" />
          <stop offset=".25" stopColor="#77706f" />
          <stop offset=".34" stopColor="#7f8090" />
          <stop offset=".48" stopColor="#8d8a93" />
          <stop offset=".6" stopColor="#a39b95" />
          <stop offset="1" stopColor="#a79b8d" />
        </linearGradient>
        <linearGradient id="shelf">
          <stop offset="0" stopColor="#345e9d" />
          <stop offset=".16" stopColor="#3969a9" />
          <stop offset=".26" stopColor="#6c93c9" />
          <stop offset="1" stopColor="#7399cb" />
        </linearGradient>
        <linearGradient id="shade" x1="0" y1="0" x2="0" y2="1">
          <stop offset="0" stopColor="#000" stopOpacity=".75" />
          <stop offset="1" stopColor="#000" stopOpacity="0" />
        </linearGradient>
      </defs>
      <rect y="973" width="1280" height="51" fill="url(#sky)" />
      <path d="M530 973 L560 990 L600 1000 H800 L640 985 Z" fill="#b3aaa5" opacity=".6" />
      <path d="M530 973 L630 999 H480 Z" fill="#72727f" opacity=".5" />
      <path d="M820 973 L812 1003 L860 1000 L872 973 Z" fill="#3b4f74" />
      <path d="M877 973 L867 995 L878 993 L887 973 Z" fill="#20242c" />
      <path d="M905 973 L1000 1002 H980 L925 973 Z" fill="#2a2e37" />
      <path d="M58 1024 L140 999 H1144 L1228 1024 Z" fill="url(#shelf)" />
      <path d="M58 1024 L83 1016 L98 1024 Z" fill="#8d8d93" />
      <path d="M58 1024 L140 999 M1144 999 L1228 1024" stroke="#222b38" strokeWidth=".8" fill="none" />
      <path d="M902 1008 L909 1009 M909 1013 L917 1015 M178 1014 L188 1013" stroke="#a5a6a2" strokeWidth="2" />
      <rect y="973" width="1280" height="9" fill="url(#shade)" />
    </svg>
  );
}

export default function App() {
  return (
    <div className="relative flex h-[1024px] w-[1280px] flex-col overflow-hidden bg-white font-['DejaVu_Sans',sans-serif]">
      <TabStrip />
      <Toolbar />
      <InfoBar />
      <div className="flex h-[875px] shrink-0">
        <main className="flex w-[1265px] flex-col bg-white font-['Liberation_Sans',sans-serif]">
          <ContactForm />
          <div className="mt-[166px] flex gap-[80px] pl-[43px]">
            <Office
              title="ESCRITÓRIO"
              lines={["Av. Presidente Juscelino Kubitschek, 1600 - 8º andar - Itaim Bibi São Paulo /SP - CEP 04543-000 -", "CNPJ 54.305.743/0001-07"]}
              credit="Dados cartográficos ©2015 Google, Sanborn"
            >
              <OfficeStreets />
            </Office>
            <div className="pt-[40px]">
              <Office
                title="FÁBRICA"
                lines={["Rodovia BR 050, Km 283, Quadras 5,7,7A, S/Nº - DIMIC Catalão/GO - CEP 75709-901 - CNPJ", "54.305.743/0011-70"]}
                credit="Dados cartográficos ©2015 Google"
              >
                <FactoryStreets />
              </Office>
            </div>
          </div>
          <div className="mt-auto h-[14px] bg-[#0b0b0b] bg-[radial-gradient(#262626_0.8px,transparent_1px)] bg-[length:4px_3px]" />
        </main>
        <Scrollbar />
      </div>
      <div className="relative h-[51px] shrink-0">
        <Wallpaper />
        <div className="relative flex">
          <div className="ml-[136px] mt-[1px]">
            <CoatOfArms />
          </div>
          <div className="ml-[15px] mt-[12px]">
            <DockRow items={ICONS} />
          </div>
          <div className="ml-[11.5px] mt-[12px]">
            <DockRow items={TRAY} />
          </div>
        </div>
      </div>
      <svg className="absolute left-[1041px] top-[613px]" width="14" height="21" viewBox="0 0 14 21">
        <path d="M1.5 1.5 V17 L5 13.5 L7.5 19 L10 18 L7.7 12.5 H12.3 Z" fill="#fff" stroke="#222" strokeWidth="1.2" />
      </svg>
    </div>
  );
}
